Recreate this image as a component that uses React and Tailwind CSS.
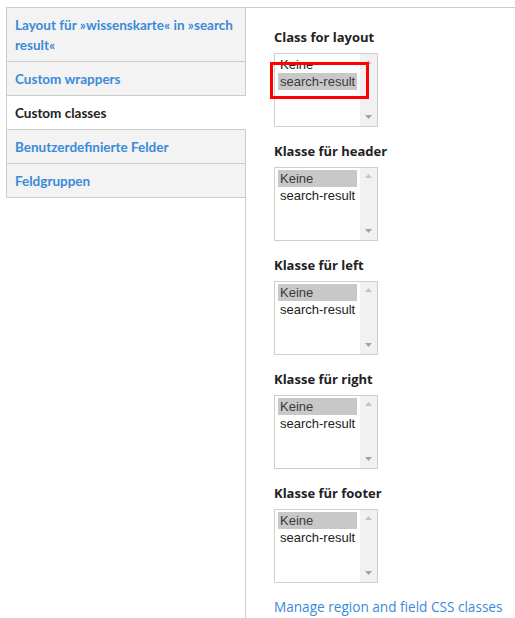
import React from 'react';

const tabs = [
  { label: 'Layout für »wissenskarte« in »search result«' },
  { label: 'Custom wrappers' },
  { label: 'Custom classes', active: true },
  { label: 'Benutzerdefinierte Felder' },
  { label: 'Feldgruppen' },
];

const regions = [
  { title: 'Class for layout', selected: 1, marked: true },
  { title: 'Klasse für header', selected: 0 },
  { title: 'Klasse für left', selected: 0 },
  { title: 'Klasse für right', selected: 0 },
  { title: 'Klasse für footer', selected: 0 },
];

function ListBox({ selected, marked }) {
  const options = ['Keine', 'search-result'];
  return (
    <div className="relative h-[74px] w-[104px] border border-[#cfcfcf] bg-white flex">
      <div className="flex-1 px-[3px] pt-[2px] font-['Liberation_Sans',Arial,sans-serif] text-[13px] leading-[17px]">
        {options.map((o, i) => (
          <div
            key={o}
            className={
              'pl-[2px] whitespace-nowrap ' +
              (i === selected ? 'bg-[#c8c8c8] text-[#3a3a3a]' : 'text-[#222]')
            }
          >
            {o}
          </div>
        ))}
      </div>
      {/* fake scrollbar */}
      <div className="w-[17px] bg-[#f1f1f1] flex flex-col items-center justify-between pt-[6px] pb-[7px]">
        <svg width="7" height="4" viewBox="0 0 7 4">
          <path d="M0 4 L3.5 0 L7 4 Z" fill="#c4c4c4" />
        </svg>
        <svg width="7" height="4" viewBox="0 0 7 4">
          <path d="M0 0 L7 0 L3.5 4 Z" fill="#a3a3a3" />
        </svg>
      </div>
      {marked && (
        <div className="absolute left-[-5px] top-[8px] w-[99px] h-[37px] border-[3px] border-[#ff0000]" />
      )}
    </div>
  );
}

export default function App() {
  return (
    <div className="min-h-screen bg-white pt-[7px] pl-[6px] font-['Open_Sans',sans-serif]">
      <div className="flex min-h-[611px] border-t border-[#cccccc]">
        {/* Vertical tabs */}
        <div className="w-[240px] shrink-0 border-r border-[#cccccc]">
          <ul className="border-l border-b border-[#cccccc]">
            {tabs.map((t, i) => (
              <li
                key={t.label}
                className={
                  (i < tabs.length - 1 ? 'border-b border-[#cccccc] ' : '') +
                  (t.active
                    ? 'relative -mr-px bg-white text-[#222]'
                    : 'bg-[#f3f3f3] text-[#3b8ad9]')
                }
              >
                <div className="pl-[8px] pr-[4px] pt-[7px] pb-[6px] font-['Lato',sans-serif] text-[13.5px] font-bold leading-[20px]">
                  {t.label}
                </div>
              </li>
            ))}
          </ul>
        </div>

        {/* Region classes */}
        <div className="flex-1 pl-[28px] pt-[20px]">
          {regions.map((r) => (
            <div key={r.title} className="mb-[15px]">
              <div className="text-[13px] font-bold leading-[18px] text-[#222] mb-[7px]">{r.title}</div>
              <ListBox selected={r.selected} marked={r.marked} />
            </div>
          ))}
          <a href="#" className="block text-[13.6px] leading-[18px] text-[#3b8ad9]">
            Manage region and field CSS classes
          </a>
        </div>
      </div>
    </div>
  );
}
